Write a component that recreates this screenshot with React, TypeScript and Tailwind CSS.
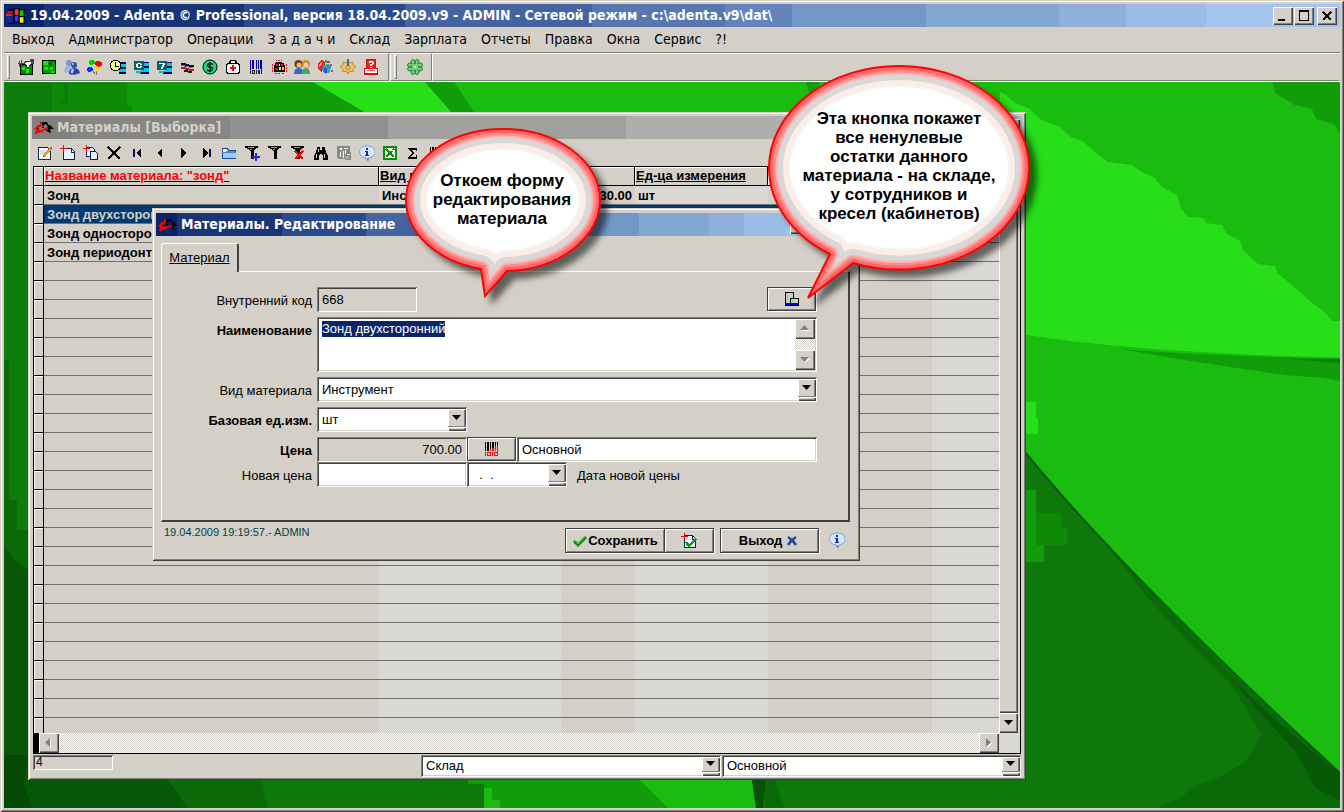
import { useEffect, useRef } from "react";
import type { ReactNode } from "react";
import clsx from "clsx";

const raised =
  "bg-[#d4d0c8] shadow-[inset_1px_1px_#d4d0c8,inset_-1px_-1px_#404040,inset_2px_2px_#fff,inset_-2px_-2px_#808080]";
const raisedButton =
  "bg-[#d4d0c8] shadow-[inset_1px_1px_#fff,inset_-1px_-1px_#404040,inset_-2px_-2px_#808080]";
const framedButton =
  "border border-[#404040] bg-[#d4d0c8] shadow-[inset_1px_1px_#fff,inset_-1px_-1px_#808080,1px_1px_#fff]";
const sunken =
  "shadow-[inset_1px_1px_#808080,inset_-1px_-1px_#fff,inset_2px_2px_#404040,inset_-2px_-2px_#d4d0c8]";
const activeBar =
  "bg-[linear-gradient(90deg,#0a246a_3%,#1a3575_3%_18%,#2a4a8c_18%_30%,#44639f_30%_44%,#5876b0_44%_54%,#6584bd_54%_59%,#7297c8_59%_69%,#82a7d0_69%_79%,#90b0dc_79%_84%,#9abce6_84%_90%,#a3c5ed_90%)]";
const inactiveBar =
  "bg-[linear-gradient(90deg,#808080_4%,#868684_4%_20%,#909090_20%_36%,#a0a09e_36%_60%,#aeaeac_60%_80%,#bcbcba_80%)]";
const dither =
  "bg-[repeating-conic-gradient(#fff_0_25%,#d4d0c8_0_50%)] bg-[length:2px_2px]";

const Icon = ({ children }: { children: ReactNode }) => (
  <svg
    viewBox="0 0 16 16"
    className="size-4 shrink-0"
    shapeRendering="crispEdges"
    aria-hidden="true"
  >
    {children}
  </svg>
);

// two overlapping stars, red on the left and black on the right
const Logo = () => (
  <svg viewBox="0 0 20 14" className="h-[14px] w-5 shrink-0" aria-hidden="true">
    <path d="M0 8l3-3 1-1 2 0 0-4 3 3-3 3-2 2 4 1 3-2 1 2-3 1-1 2-2-1-3 2-2 0 1-4z" fill="#f00" />
    <path d="M8 1l5 0 1 3 2 0 4 4-4 0 1 4-3-1-3-3 3-2-2-3-2 1-1 2-1-2z" fill="#000" />
    <path d="M8 6h2v1h-2zM4 7h1v1h-1z" fill="#000" />
    <path d="M12 7h2v2h-2z" fill="#f00" />
  </svg>
);

const icons: Record<string, ReactNode> = {
  flag: (
    <>
      <path d="M6 1h5v1h4v13h-4v-1h-5z" fill="#000" />
      <path d="M7 2h3v5h-3z" fill="#f33" />
      <path d="M11 3h3v5h-3z" fill="#0c0" />
      <path d="M7 8h3v5h-3z" fill="#33f" />
      <path d="M11 9h3v5h-3z" fill="#fe0" />
      <path d="M1 4h4v1h-4zM0 6h5v2h-5z" fill="#e22" />
      <path d="M0 9h5v2h-5zM1 12h4v1h-4z" fill="#22d" />
      <path d="M2 2h4v1h-4zM2 14h4v1h-4z" fill="#000" />
    </>
  ),
  chartHand: (
    <>
      <path d="M2 5h12v10h-12z" fill="#080" stroke="#000" />
      <path d="M4 8h3v3h-3zM8 10h3v4h-3z" fill="#0f0" />
      <path d="M1 2v6M0 4h7M3 1v5" stroke="#f00" fill="none" />
      <path d="M6 4l3-2h3l2 2-3 4h-2z" fill="#fff" stroke="#334" />
      <path d="M12 0h4v5h-3z" fill="#446" />
    </>
  ),
  chart: (
    <>
      <path d="M1.500 1.500h13v13h-13z" fill="#090" stroke="#000" />
      <path d="M2 2h5v4h-5zM3 8h4v3h-4zM9 8h3v3h-3zM10 12h4v2h-4z" fill="#0e0" />
      <path d="M8 3h3v4h-3z" fill="#060" />
    </>
  ),
  people: (
    <g shapeRendering="auto">
      <circle cx="5" cy="4" r="3" fill="#7b93dd" />
      <path d="M0 12q1-6 6-5l3 6-8 1z" fill="#9db2ee" />
      <circle cx="10" cy="6" r="3" fill="#2f4fb0" />
      <path d="M5 15q0-6 5-6t6 5q-5 3-11 1z" fill="#28469f" />
      <path d="M7 11q2-2 3-1l-1 4-2 0z" fill="#b9caf7" />
      <circle cx="9" cy="5" r="1" fill="#cbd7fa" />
    </g>
  ),
  balloons: (
    <>
      <path d="M3 1h4v1h1v3h-2v1h-3v-1h-1v-3h1z" fill="#0c0" />
      <path d="M9 2h4v1h2v4h-2v1h-4v-2h-1v-3h1z" fill="#f00" />
      <path d="M1 8h4v1h1v3h-2v1h-3v-1h-1v-3h1z" fill="#03f" />
      <path d="M8 7h3v1h1v3h-1v1h-3v-1h-1v-3h1z" fill="#fd0" />
      <path d="M6 12h1v1h1v2h-1v-1h-1zM9 12h1v4h-1z" fill="#777" />
    </>
  ),
  clock: (
    <>
      <path d="M9 3h7v12h-7z" fill="#0cc" />
      <path d="M9 3h7v2h-7zM10 8h6v2h-6zM9 13h7v2h-7z" fill="#007" />
      <path d="M3 1h5v1h2v2h1v5h-1v2h-2v1h-5v-1h-2v-2h-1v-5h1v-2h2z" fill="#000" />
      <path d="M3 2h5v1h1v1h1v5h-1v1h-1v1h-5v-1h-1v-1h-1v-5h1v-1h1z" fill="#ff9" />
      <path d="M5 3h1v4h3v1h-4z" fill="#000" />
    </>
  ),
  calendarC: (
    <>
      <path d="M8 3h8v12h-8z" fill="#0cc" />
      <path d="M9 3h7v1h-7zM10 7h6v2h-6zM7 13h9v2h-9z" fill="#007" />
      <path d="M1 2h10v9h-10z" fill="#066" />
      <path d="M4 4h4v1h1v1h-2v-1h-2v3h2v-1h2v1h-1v1h-4v-1h-1v-3h1z" fill="#fff" />
      <path d="M3 12h5v2h-5z" fill="#0bb" />
    </>
  ),
  calendar7: (
    <>
      <path d="M8 3h8v12h-8z" fill="#0cc" />
      <path d="M9 3h7v1h-7zM10 7h6v2h-6zM7 13h9v2h-9z" fill="#007" />
      <path d="M1 2h10v9h-10z" fill="#066" />
      <path d="M3 4h6v2h-1v2h-1v2h-2v-2h1v-2h1v-1h-4z" fill="#fff" />
      <path d="M3 12h5v2h-5z" fill="#0bb" />
    </>
  ),
  waves: (
    <>
      <path d="M2 4h5v1h3v1h5v2h-5v-1h-4v-1h-4z" fill="#111" />
      <path d="M2 6h4v1h4v1h4v1h-4v-1h-5v-1h-3z" fill="#66d" />
      <path d="M2 8h5v1h3v1h5v2h-5v-1h-4v-1h-4z" fill="#c11" />
      <path d="M5 11h4v1h4v2h-4v-1h-4z" fill="#222" />
    </>
  ),
  dollar: (
    <g shapeRendering="auto">
      <circle cx="8" cy="8" r="7" fill="#1fd67a" stroke="#000" />
      <path
        d="M11 5.500q-3-2-5 0t2 2.500 2 3-5 0M8 3v10"
        fill="none"
        stroke="#000"
        strokeWidth="1.200"
      />
    </g>
  ),
  medkit: (
    <>
      <path d="M5 1h6v1h1v2h2v1h1v9h-1v1h-12v-1h-1v-9h1v-1h2v-2h1z" fill="#000" />
      <path d="M6 2h4v2h-4zM3 5h10v1h1v7h-1v1h-10v-1h-1v-7h1z" fill="#fff" />
      <path d="M7 6h2v2h2v2h-2v2h-2v-2h-2v-2h2z" fill="#f00" />
    </>
  ),
  barcodeBlue: (
    <>
      <path
        d="M2 1h1v9h-1zM4 1h2v9h-2zM8 1h1v9h-1zM10 1h1v9h-1zM12 1h2v9h-2z"
        fill="#009"
      />
      <path
        d="M2 10h1v5h-1zM4 11h3v4h-3zM8 11h1v4h-1zM10 11h2v4h-2zM13 10h1v5h-1z"
        fill="#222"
      />
      <path d="M5 12h1v2h-1z" fill="#d4d0c8" />
    </>
  ),
  barcode: (
    <>
      <path d="M2 2h1v8h-1zM4 2h2v8h-2zM7 2h1v8h-1zM9 2h2v8h-2zM12 2h2v8h-2z" />
      <path d="M2 11h1v3h-1zM4 11h2v3h-2zM7 11h1v3h-1zM9 11h2v3h-2zM12 11h2v3h-2z" />
    </>
  ),
  barcodeRed: (
    <>
      <path d="M1 1h1v9h-1zM3 1h2v9h-2zM6 1h1v7h-1zM8 1h2v6h-2zM11 1h1v4h-1zM13 1h1v3h-1z" />
      <path
        d="M1 11h1v4h-1zM3 11h4v4h-4zM8 11h1v4h-1zM10 11h4v4h-4zM6 8h1v2h-1zM8 7h2v3h-2zM11 5h1v5h-1zM13 4h1v7h-1z"
        fill="#e11"
      />
      <path d="M4 12h2v2h-2zM11 12h2v2h-2z" fill="#d4d0c8" />
    </>
  ),
  gift: (
    <>
      <path d="M4 4h1v-1h6v1h2v2h1v7h-11v-7h1z" fill="#000" />
      <path d="M5 5h2v2h-2zM10 5h2v2h-2zM4 9h3v2h-3z" fill="#e11" />
      <path d="M8 5h1v2h-1zM8 8h2v3h-2zM11 8h2v3h-2z" fill="#ee0" />
      <path
        d="M1 5h1v2h-1zM1 8h1v2h-1zM1 11h1v2h-1zM15 5h1v2h-1zM15 8h1v2h-1zM15 11h1v2h-1zM5 1h1v1h-1zM7 1h2v1h-2zM10 1h1v1h-1zM4 14h2v1h-2zM7 14h2v1h-2zM11 14h2v1h-2z"
        fill="#e11"
      />
    </>
  ),
  users: (
    <g shapeRendering="auto">
      <circle cx="4.500" cy="5" r="4" fill="#6b3a10" />
      <circle cx="5" cy="6" r="2.500" fill="#f4b884" />
      <circle cx="12" cy="5" r="4" fill="#c98a2a" />
      <circle cx="12" cy="6" r="2.500" fill="#f9cf9a" />
      <path d="M0 15q0-6 5-6t4 6z" fill="#2a6cc8" />
      <path d="M8 15q0-6 4-6t4 6z" fill="#4fa35a" />
    </g>
  ),
  cubes: (
    <>
      <path d="M1 4l4-3 3 3v7l-4 2-3-3z" fill="#d22" />
      <path d="M2 5l3-2v3l-3 2z" fill="#e8b" />
      <path d="M6 6l5-1 3 3-1 5-5 2-3-3z" fill="#2a9" />
      <path d="M7 9h3v5h-3z" fill="#35d" />
      <path d="M10 2h3v2h-3zM13 5h2v2h-2zM14 11h2v2h-2z" fill="#c2c" />
      <path d="M8 1h2v3h-2z" fill="#2b2" />
    </>
  ),
  gear: (
    <g shapeRendering="auto">
      <path
        d="M8 2l2 2 3-1v3l3 2-3 2v3l-3-1-2 3-2-3-3 1v-3l-3-2 3-2v-3l3 1z"
        fill="#f1c863"
        stroke="#b98a28"
      />
      <circle cx="8" cy="8.500" r="2" fill="#d4d0c8" stroke="#a47a20" />
      <path d="M7 0h2v7h-2z" fill="#456b8f" />
    </g>
  ),
  question: (
    <>
      <path d="M3 0h10v9h2v7h-14v-7h2z" fill="#c11" />
      <path d="M4 1h8v8h-8z" fill="#f22" />
      <path d="M6 2h4v1h1v2h-1v1h-1v1h-2v-2h2v-2h-1v1h-2zM7 8h2v1h-2z" fill="#fff" />
      <path d="M2 10h12v4h-12z" fill="#fff" />
      <path d="M4 11h8v1h-8z" fill="#d55" />
    </>
  ),
  clover: (
    <g shapeRendering="auto" fill="#6fd47c" stroke="#2a7c38">
      <ellipse cx="6" cy="3" rx="2" ry="2.500" />
      <ellipse cx="10" cy="3" rx="2" ry="2.500" />
      <ellipse cx="3" cy="6" rx="2.500" ry="2" />
      <ellipse cx="13" cy="6" rx="2.500" ry="2" />
      <ellipse cx="3" cy="10" rx="2.500" ry="2" />
      <ellipse cx="13" cy="10" rx="2.500" ry="2" />
      <ellipse cx="6" cy="13" rx="2" ry="2.500" />
      <ellipse cx="10" cy="13" rx="2" ry="2.500" />
      <path d="M5 5h6v6h-6z" stroke="none" />
      <circle cx="8" cy="8" r="1" fill="#ffef70" stroke="none" />
    </g>
  ),
  edit: (
    <>
      <path d="M1.500 2.500h9l3 3v9h-12z" fill="#fff" stroke="#125" />
      <path d="M3 5h5v5h-5z" fill="#cfe3fb" />
      <path d="M13 2h2v2l-6 7-3 1 1-3z" fill="#e79a2a" />
      <path d="M13 2h2v2h-2z" fill="#d55" />
      <path d="M6 11h1v1h-1z" fill="#000" />
    </>
  ),
  add: (
    <>
      <path d="M3.500 3.500h8l3 3v8h-11z" fill="#eaf3ff" stroke="#125" />
      <path d="M11 3v4h4" fill="none" stroke="#125" />
      <path d="M3 0h1v7h-1zM0 3h7v1h-7z" fill="#f00" />
    </>
  ),
  copy: (
    <>
      <path d="M3.500 2.500h6l2 2v7h-8z" fill="#eaf3ff" stroke="#125" />
      <path d="M7.500 6.500h5l2 2v6h-7z" fill="#eaf3ff" stroke="#125" />
      <path d="M3 0h1v7h-1zM0 3h7v1h-7z" fill="#f00" />
    </>
  ),
  del: (
    <path
      d="M2 2l12 12M14 2l-12 12"
      stroke="#000"
      strokeWidth="2"
      fill="none"
    />
  ),
  first: (
    <>
      <path d="M4 4h2v8h-2z" fill="#006" />
      <path d="M12 3v10l-5-5z" />
    </>
  ),
  prev: <path d="M10 3v10l-5-5z" />,
  next: <path d="M6 3v10l5-5z" />,
  last: (
    <>
      <path d="M11 4h2v8h-2z" fill="#006" />
      <path d="M5 3v10l5-5z" />
    </>
  ),
  folder: (
    <>
      <path d="M1.500 12.500v-9h5l1 2h7v8h-13z" fill="#fff" stroke="#17528c" />
      <path d="M2 8h13v5h-13z" fill="#9cc9f5" />
      <path d="M1 7h3l1-1h9v1h1v1h-14z" fill="#4b8ac6" />
    </>
  ),
  filterAdd: (
    <>
      <path d="M1 1h13v2h-2v1h-1v1h-1v9h-3v-8h-1v-1h-1v-1h-2v-1h-2z" />
      <path d="M4 2h6v1h-6zM6 4h2v1h-2z" fill="#999" />
      <path d="M11 8h1v3h3v1h-3v3h-1v-3h-3v-1h3z" fill="#22f" stroke="#22f" />
    </>
  ),
  filter: (
    <>
      <path d="M1 1h13v2h-2v1h-1v1h-1v9h-3v-8h-1v-1h-1v-1h-2v-1h-2z" />
      <path d="M4 2h6v1h-6zM6 4h2v1h-2z" fill="#999" />
    </>
  ),
  filterDel: (
    <>
      <path d="M1 1h13v2h-2v1h-1v1h-1v9h-3v-8h-1v-1h-1v-1h-2v-1h-2z" />
      <path d="M4 2h6v1h-6z" fill="#999" />
      <path d="M5 6l8 8M13 6l-8 8" stroke="#f00" strokeWidth="2.500" fill="none" />
    </>
  ),
  binoculars: (
    <>
      <path d="M4 2h3v3h2v-3h3v3h1v3h1v2h1v5h-5v-5h-1v-1h-2v1h-1v5h-5v-5h1v-2h1v-3h1z" />
      <path d="M3 9h1v4h-1zM11 9h1v4h-1zM5 4h1v3h-1z" fill="#ccc" />
    </>
  ),
  report: (
    <>
      <path d="M1 1h13v6h1v8h-6v-1h-7v-1h-1z" fill="#888" />
      <path d="M4 3h2v2h-2zM8 3h4v1h-4zM4 7h1v5h-1zM7 6h1v7h-1zM9 5h1v4h-1zM11 9h3v1h-3z" fill="#fff" />
      <path d="M9 11h4v3h-4z" fill="#aaa" />
    </>
  ),
  info: (
    <g shapeRendering="auto">
      <path d="M8 1a7 6 0 0 1 2 12l-1 3-2-3a7 6 0 0 1 1-12z" fill="#d5e7fa" stroke="#7ea3cb" />
      <path d="M4 12a7 6 0 0 0 6 1l-1 3-2-3z" fill="#5b87b8" />
      <path d="M7 3h2v2h-2zM6 6h3v4h1v1h-4v-1h1v-3h-1z" fill="#0b2fa8" />
    </g>
  ),
  excel: (
    <>
      <path d="M2 2h12v12h-12z" fill="#fff" stroke="#0a8a0a" strokeWidth="2" />
      <path d="M4 4l8 8M12 4l-8 8" stroke="#0a8a0a" strokeWidth="2.500" fill="none" />
      <path d="M9 5h3v1h-3z" fill="#fff" />
    </>
  ),
  sigma: (
    <path d="M3 3h9v3h-1v-1h-5l3 3-3 4h5v-2h1v4h-9v-1l4-5-4-4z" />
  ),
  stock: (
    <>
      <path d="M1.500 1.500h8v13h-8z" fill="#d4d0c8" stroke="#000" />
      <path d="M6.500 7.500h8v7h-8z" fill="#d4d0c8" stroke="#000" />
      <path d="M3 3h1v8h-1zM8 9h1v2h-1z" fill="#0ff" />
      <path d="M2 12h4v2h-4zM7 12h7v2h-7z" fill="#00f" />
    </>
  ),
  check: (
    <g shapeRendering="auto">
      <path d="M2 8l4 4 8-8" fill="none" stroke="#0a8a0a" strokeWidth="3" />
      <path d="M3 8l3 3 7-7" fill="none" stroke="#38c538" />
    </g>
  ),
  saveNew: (
    <>
      <path d="M3.500 2.500h8l3 3v9h-11z" fill="#eaf3ff" stroke="#125" />
      <path d="M11 2v4h4" fill="none" stroke="#125" />
      <path d="M3 0h1v6h-1zM0 3h7v1h-7z" fill="#f00" />
      <path d="M5 9l3 4 7-7" fill="none" stroke="#0a9a0a" strokeWidth="2.500" />
    </>
  ),
  cross: (
    <g shapeRendering="auto">
      <path d="M4 4q5 3 8 8M12 4q-5 3-8 8" stroke="#1d4a96" strokeWidth="2.500" fill="none" />
    </g>
  ),
};

const menu = [
  "Выход",
  "Администратор",
  "Операции",
  "З а д а ч и",
  "Склад",
  "Зарплата",
  "Отчеты",
  "Правка",
  "Окна",
  "Сервис",
  "?!",
];

const mainTools = [
  "chartHand",
  "chart",
  "people",
  "balloons",
  "clock",
  "calendarC",
  "calendar7",
  "waves",
  "dollar",
  "medkit",
  "barcodeBlue",
  "gift",
  "users",
  "cubes",
  "gear",
  "question",
];

const listTools = [
  "edit",
  "add",
  "copy",
  "del",
  "first",
  "prev",
  "next",
  "last",
  "folder",
  "filterAdd",
  "filter",
  "filterDel",
  "binoculars",
  "report",
  "info",
  "excel",
  "sigma",
  "barcode",
];

const rows = [
  ["Зонд", "Инструмент", "30.00", "шт"],
  ["Зонд двухсторонний", "Инструмент", "700.00", "шт"],
  ["Зонд односторонний", "Инструмент", "", "шт"],
  ["Зонд периодонтальный", "Инструмент", "", "шт"],
  ...Array.from({ length: 25 }, () => ["", "", "", ""]),
];

const ToolButton = ({ name }: { name: string }) => (
  <button type="button" aria-label={name} className="flex h-6 w-[23px] items-center justify-center">
    <Icon>{icons[name]}</Icon>
  </button>
);

const Grip = () => (
  <span className="mr-1 ml-[3px] h-6 w-[3px] border-t border-r border-b border-l border-t-white border-r-[#808080] border-b-[#808080] border-l-white" />
);

const Triangle = ({ dir, muted }: { dir: "up" | "down" | "left" | "right"; muted?: boolean }) => {
  const paths = {
    up: "M0 6h9l-4.500-5z",
    down: "M0 2h9l-4.500 5z",
    left: "M6 0v9l-5-4.500z",
    right: "M2 0v9l5-4.500z",
  };
  return (
    <svg viewBox="0 0 10 10" className="size-[10px]" aria-hidden="true">
      {muted && <path d={paths[dir]} fill="#fff" transform="translate(1 1)" />}
      <path d={paths[dir]} fill={muted ? "#808080" : "#000"} />
    </svg>
  );
};

const CaptionButton = ({ kind }: { kind: "min" | "max" | "close" }) => (
  <button
    type="button"
    aria-label={kind}
    className={clsx(raisedButton, "flex h-[18px] w-5 items-center justify-center", kind === "close" && "ml-[3px]", kind === "max" && "ml-px")}
  >
    <svg viewBox="0 0 12 12" className="size-3" shapeRendering="crispEdges" aria-hidden="true">
      {kind === "min" && <path d="M1 9h7v2h-7z" />}
      {kind === "max" && <path d="M1 0h10v11h-10zM2 2v8h8v-8z" fillRule="evenodd" />}
      {kind === "close" && (
        <path d="M2 2l8 8M10 2l-8 8" stroke="#000" strokeWidth="2" fill="none" />
      )}
    </svg>
  </button>
);

const Combo = ({ id, label, value, className }: { id: string; label?: string; value: string; className?: string }) => (
  <div className={clsx("relative", className)}>
    <select
      id={id}
      aria-label={label}
      className={clsx(sunken, "size-full appearance-none bg-white pl-[5px] text-[13px] text-black outline-none")}
    >
      <option>{value}</option>
    </select>
    <span className={clsx(raisedButton, "pointer-events-none absolute top-[2px] right-px bottom-px flex w-[18px] flex-col")}>
      <span className="flex flex-1 items-center justify-center border-b border-[#808080]">
        <Triangle dir="down" />
      </span>
      <span className="mb-px h-[3px] border-t border-white" />
    </span>
  </div>
);

const Wallpaper = () => (
  <svg
    viewBox="4 82 1336 726"
    preserveAspectRatio="none"
    className="absolute inset-0 size-full"
    aria-hidden="true"
  >
    <rect x="4" y="82" width="1336" height="726" fill="#1abc0f" />
    <path d="M4 82h450l40 60v600h-490z" fill="#119d0a" />
    <path d="M4 82h123v24h5v40h-128z" fill="#0e8a08" />
    <path d="M4 82h48v726h-48z" fill="#0e7c0a" />
    <path d="M64 82h4v22h-8v-4h4z" fill="#0e7c0a" />
    <path d="M313 82h112l30 34h-84z" fill="#27de19" />
    <path d="M425 82h26q12 16 24 34h-20z" fill="#119d0a" />
    <path d="M806 82h14l-4 14h-6z" fill="#119d0a" />
    <path
      d="M1000 92L1006 95 1012 101 1020 105 1030 109 1040 119 1060 127 1070 137 1082 141 1100 156 1108 162 1132 165 1140 171 1155 178 1162 187 1177 195 1181 209 1188 217 1204 218 1206 223 1222 225 1226 233 1240 241 1243 250 1258 264 1275 266 1278 274 1287 281 1300 292 1312 303 1325 312 1332 321 1340 321V358Q1130 352 1020 334L1000 330z"
      fill="#27de19"
    />
    <path d="M1273 82h67v52l-6-10-18-5-4-10-17-4-10-6-10-6z" fill="#119d0a" />
    <path d="M1120 349q100 8 220 9v23l-16-3-40-3-60-9-40-6z" fill="#119d0a" />
    <path d="M1290 359h50v4z" fill="#0e780a" />
    <path d="M1026 402h10v16h2v16h-12z" fill="#27de19" />
    <path d="M1020 446q100 124 320 327v35h-320z" fill="#0e780a" />
    <path d="M1026 490h10v23h8v17h-8v15h8v17h-18z" fill="#119d0a" />
    <path d="M1036 513h25v14h6v18h-31z" fill="#0e8a08" />
    <path d="M1105 543q100 112 235 230v35h-184l24-10 16-13 20-6 30-17 15-28-13-23-20-30-40-40-40-43z" fill="#0a6a08" />
    <path d="M1230 677q50 50 110 96v28l-24-13-20-36-40-44z" fill="#065a06" />
    <path d="M1020 446q100 124 320 327" fill="none" stroke="#0b5a18" strokeWidth="2" />
    <path d="M4 780h480v28h-480z" fill="#0e780a" />
    <path d="M4 360h5v140h8v30h11v70h-24z" fill="#0a6a08" />
    <path d="M4 545l10 15 14 10v210h140l20 28h-184z" fill="#065806" />
    <path d="M4 755h24l-4 30 8 23h-28z" fill="#044a04" />
    <path d="M168 780h93l7 28h-80z" fill="#0a6a08" />
    <path d="M468 780h184l20 28h-172v-8h-8v-12h-8v-4h-16z" fill="#119d0a" />
    <path d="M640 780h112l4 28h-88l-14-14z" fill="#1abc0f" />
    <path d="M752 780h274v28h-270z" fill="#0e780a" />
    <path d="M752 780h14l-3 28h-7z" fill="#065206" />
    <path d="M765 780h10l9 28h-19z" fill="#0a6a08" />
  </svg>
);

type BubbleProps = {
  id: string;
  path: string;
  box: string;
  className: string;
  children: ReactNode;
};

const Bubble = ({ id, path, box, className, children }: BubbleProps) => (
  <div className={clsx("pointer-events-none absolute z-20 text-center text-[17px] leading-[19px] font-bold text-black", className)}>
    <svg
      viewBox={box}
      className="absolute inset-0 size-full overflow-visible drop-shadow-[7px_7px_3px_rgba(0,0,0,0.55)]"
      aria-hidden="true"
    >
      <clipPath id={id}>
        <path d={path} />
      </clipPath>
      <g clipPath={`url(#${id})`} strokeLinejoin="round">
        <path d={path} fill="#fff" stroke="#eef6f6" strokeWidth="42" />
        <path d={path} fill="none" stroke="#ffece6" strokeWidth="38" />
        <path d={path} fill="none" stroke="#d8d8d8" strokeWidth="28" />
        <path d={path} fill="none" stroke="#ffb4b4" strokeWidth="17" />
        <path d={path} fill="none" stroke="#ff8c8c" strokeWidth="13" />
        <path d={path} fill="none" stroke="#ff6868" strokeWidth="8" />
      </g>
      <path d={path} fill="none" stroke="#f00" strokeWidth="2" />
    </svg>
    <p className="relative">{children}</p>
  </div>
);

const MaterialsList = () => (
  <section className={clsx(raised, "absolute top-[30px] left-[24px] flex h-[668px] w-[998px] flex-col p-1")}>
    <header className={clsx(inactiveBar, "flex h-[23px] shrink-0 items-center gap-[3px] pr-[2px] pl-[2px]")}>
      <Logo />
      <h2 className="flex-1 font-['DejaVu_Sans_Condensed','DejaVu_Sans',sans-serif] text-[14px] font-bold text-[#d4d0c8]">
        Материалы [Выборка]
      </h2>
      <CaptionButton kind="close" />
    </header>
    <div className="flex h-[27px] shrink-0 items-center px-px">
      {listTools.map((name) => (
        <ToolButton key={name} name={name} />
      ))}
    </div>

    <div className="mr-px ml-px flex min-h-0 flex-1 border border-black">
      <div className="flex min-w-0 flex-1 flex-col">
        <div className="min-h-0 flex-1 overflow-hidden">
          <table className="w-full table-fixed border-separate border-spacing-0 text-left text-[13px] leading-[18px] font-bold whitespace-nowrap text-black">
            <colgroup>
              <col className="w-[10px]" />
              <col className="w-[335px]" />
              <col className="w-[182px] bg-[#dad8d5]" />
              <col className="w-[74px]" />
              <col className="w-[133px] bg-[#dad8d5]" />
              <col className="w-[164px]" />
              <col className="bg-[#dad8d5]" />
            </colgroup>
            <thead className="bg-[#d4d0c8] underline">
              <tr className="h-[19px] [&>th]:overflow-hidden [&>th]:border-r [&>th]:border-b [&>th]:border-black [&>th]:p-0 [&>th]:pl-px [&>th]:shadow-[inset_1px_1px_#fff]">
                <th />
                <th className="text-[#f00]">Название материала: "зонд"</th>
                <th>Вид материала</th>
                <th>Цена</th>
                <th>Ед-ца измерения</th>
                <th />
                <th />
              </tr>
            </thead>
            <tbody className="leading-4">
              {rows.map(([name, kind, price, unit], i) => (
                <tr
                  key={i}
                  className={clsx(
                    "h-[19px] [&>td]:overflow-hidden [&>td]:border-b [&>td]:border-[#707070] [&>td]:px-[3px] [&>td]:pt-[2px] [&>td]:pb-0",
                    i === 1 && "bg-[#003a70] text-[#d4d0c8]"
                  )}
                >
                  <th className="border-r border-b border-black bg-[#d4d0c8] p-0 shadow-[inset_1px_1px_#fff]" />
                  <td>{name}</td>
                  <td>{kind}</td>
                  <td className="text-right">{price}</td>
                  <td>{unit}</td>
                  <td />
                  <td />
                </tr>
              ))}
            </tbody>
          </table>
        </div>
        <div className={clsx(dither, "flex h-5 border-l-[5px] border-black")}>
          <button type="button" aria-label="Влево" className={clsx(raisedButton, "flex w-5 items-center justify-center")}>
            <Triangle dir="left" muted />
          </button>
          <button type="button" aria-label="Вправо" className={clsx(raisedButton, "ml-auto flex w-5 items-center justify-center")}>
            <Triangle dir="right" muted />
          </button>
        </div>
      </div>
      <div className="flex w-[21px] flex-col bg-[#dad8d5] pr-[2px]">
        <span className={clsx(raisedButton, "flex-1")} />
        <button type="button" aria-label="Вниз" className={clsx(raisedButton, "flex h-5 items-center justify-center")}>
          <Triangle dir="down" />
        </button>
        <span className="h-5" />
      </div>
    </div>

    <footer className="mr-px ml-px flex h-[22px] shrink-0 items-start pt-px">
      <input
        aria-label="Количество"
        readOnly
        defaultValue="4"
        className={clsx(sunken, "h-[15px] w-20 px-[3px] text-[12px] leading-[15px] text-black outline-none")}
      />
      <Combo id="store" label="Место" value="Склад" className="ml-auto h-[22px] w-[300px]" />
      <Combo id="store-name" label="Название" value="Основной" className="ml-px h-[22px] w-[299px]" />
    </footer>
  </section>
);

const EditDialog = () => {
  const nameRef = useRef<HTMLTextAreaElement>(null);

  // the name comes up selected when the form opens
  useEffect(() => {
    nameRef.current?.focus();
    nameRef.current?.select();
  }, []);

  const label = "pt-[6px] pr-[5px] text-right leading-[15px]";
  const field = "h-[25px] px-[5px] text-[13px] text-black outline-none";

  return (
    <section className={clsx(raised, "absolute top-[126px] left-[148px] flex h-[353px] w-[708px] flex-col p-1 text-[13px] text-black")}>
      <header className={clsx(activeBar, "mt-px flex h-[23px] shrink-0 items-center pr-[2px] pl-[2px]")}>
        <Logo />
        <h2 className="flex-1 pl-[3px] font-['DejaVu_Sans_Condensed','DejaVu_Sans',sans-serif] text-[14px] font-bold text-white">
          Материалы. Редактирование
        </h2>
        <CaptionButton kind="min" />
        <CaptionButton kind="max" />
        <CaptionButton kind="close" />
      </header>

      <div className="mt-[7px] flex pl-[5px]">
        <button
          type="button"
          className="relative z-10 -mb-px h-[29px] w-[78px] rounded-t-[3px] border-t border-r-2 border-l border-t-white border-r-[#404040] border-l-white bg-[#d4d0c8] text-center underline"
        >
          Материал
        </button>
      </div>

      <form className="mr-[6px] ml-[5px] grid h-[251px] shrink-0 grid-cols-[151px_500px] content-start gap-y-[5px] border-t border-r-2 border-b-2 border-l border-t-white border-r-[#404040] border-b-[#404040] border-l-white pt-[15px] pl-[4px]">
        <label htmlFor="code" className={label}>Внутренний код</label>
        <div className="flex justify-between">
          <input id="code" readOnly defaultValue="668" className={clsx(sunken, field, "w-[100px] bg-[#d4d0c8]")} />
          <button type="button" aria-label="Остатки" className={clsx(framedButton, "mr-px flex h-6 w-[49px] items-center justify-center")}>
            <Icon>{icons.stock}</Icon>
          </button>
        </div>

        <label htmlFor="name" className={clsx(label, "font-bold")}>Наименование</label>
        <div className={clsx(sunken, "flex h-[55px] bg-white p-[2px]")}>
          <textarea
            id="name"
            ref={nameRef}
            defaultValue="Зонд двухсторонний"
            className="flex-1 resize-none px-[3px] py-[2px] leading-4 outline-none selection:bg-[#0a246a] selection:text-white"
          />
          <div className={clsx(dither, "flex w-5 flex-col justify-between")}>
            <button type="button" aria-label="Вверх" className={clsx(raisedButton, "flex h-5 items-center justify-center")}>
              <Triangle dir="up" muted />
            </button>
            <button type="button" aria-label="Вниз" className={clsx(raisedButton, "flex h-5 items-center justify-center")}>
              <Triangle dir="down" muted />
            </button>
          </div>
        </div>

        <label htmlFor="kind" className={label}>Вид материала</label>
        <Combo id="kind" value="Инструмент" className="h-[25px]" />

        <label htmlFor="unit" className={clsx(label, "font-bold")}>Базовая ед.изм.</label>
        <Combo id="unit" value="шт" className="h-[25px] w-[150px]" />

        <label htmlFor="price" className={clsx(label, "font-bold")}>Цена</label>
        <div className="flex">
          <input id="price" readOnly defaultValue="700.00" className={clsx(sunken, field, "w-[150px] bg-[#d4d0c8] text-right")} />
          <button type="button" aria-label="Штрихкод" className={clsx(framedButton, "mr-px flex h-6 w-[49px] items-center justify-center")}>
            <Icon>{icons.barcodeRed}</Icon>
          </button>
          <input aria-label="Склад" defaultValue="Основной" className={clsx(sunken, field, "min-w-0 flex-1 bg-white")} />
        </div>

        <label htmlFor="new-price" className={clsx(label, "-mt-[5px]")}>Новая цена</label>
        <div className="-mt-[5px] flex">
          <input id="new-price" className={clsx(sunken, field, "w-[150px] bg-white")} />
          <Combo id="new-date" value={"\u00a0\u00a0.\u00a0\u00a0."} className="h-[25px] w-[100px]" />
          <label htmlFor="new-date" className="pt-[6px] pl-[10px] leading-[15px]">Дата новой цены</label>
        </div>
      </form>

      <footer className="flex items-start justify-end pt-[6px] pr-[11px]">
        <span className="mr-auto pl-2 text-[11px] leading-[9px] text-[#004040]">19.04.2009 19:19:57.- ADMIN</span>
        <button type="submit" className={clsx(framedButton, "flex h-[25px] w-[100px] items-center justify-center font-bold")}>
          <Icon>{icons.check}</Icon>
          Сохранить
        </button>
        <button type="button" aria-label="Сохранить и добавить" className={clsx(framedButton, "flex h-[25px] w-[49px] items-center justify-center border-l-0")}>
          <Icon>{icons.saveNew}</Icon>
        </button>
        <button type="button" className={clsx(framedButton, "mr-[10px] ml-[6px] flex h-[25px] w-[99px] items-center justify-center gap-[2px] font-bold")}>
          Выход
          <Icon>{icons.cross}</Icon>
        </button>
        <button type="button" aria-label="Справка" className="flex h-6 items-center">
          <Icon>{icons.info}</Icon>
        </button>
      </footer>
    </section>
  );
};

const App = () => {
  return (
    <main className={clsx(raised, "relative flex h-screen flex-col overflow-hidden p-1 font-['Liberation_Sans',Arial,sans-serif] text-[13px] text-black")}>
      <header className={clsx(activeBar, "flex h-[23px] shrink-0 items-center pr-[3px] pl-[2px]")}>
        <svg viewBox="0 0 16 16" preserveAspectRatio="none" className="mr-1 h-[18px] w-5" aria-hidden="true">
          {icons.flag}
        </svg>
        <h1 className="flex-1 font-['DejaVu_Sans_Condensed','DejaVu_Sans',sans-serif] text-[14px] font-bold whitespace-nowrap text-white">
          19.04.2009 - Adenta © Professional, версия 18.04.2009.v9 - ADMIN - Сетевой режим - c:\adenta.v9\dat\
        </h1>
        <CaptionButton kind="min" />
        <CaptionButton kind="max" />
        <CaptionButton kind="close" />
      </header>

      <nav className="flex h-[25px] shrink-0 items-center pl-px font-['DejaVu_Sans_Condensed','DejaVu_Sans',sans-serif] text-[14px]">
        {menu.map((item) => (
          <button key={item} type="button" className="px-[7px]">
            {item}
          </button>
        ))}
      </nav>

      <div className="flex h-[30px] shrink-0 items-stretch border-y border-t-[#808080] border-b-white">
        <div className="flex items-center border-t border-r border-b border-t-white border-r-[#808080] border-b-[#808080] pr-[6px]">
          <Grip />
          {mainTools.map((name) => (
            <ToolButton key={name} name={name} />
          ))}
        </div>
        <div className="ml-px flex items-center border border-t-white border-r-[#808080] border-b-[#808080] border-l-white pr-[5px]">
          <Grip />
          <div className="pl-[2px]">
            <ToolButton name="clover" />
          </div>
        </div>
        <div className="flex-1 border border-t-white border-r-transparent border-b-[#808080] border-l-white" />
      </div>

      <div className="relative flex-1 overflow-hidden">
        <Wallpaper />
        <MaterialsList />
        <EditDialog />
      </div>

      <Bubble
        id="bubble-open"
        box="400 120 204 185"
        path="M481 269A97 71 0 0 1 406 200A97 71 0 0 1 600 200A97 71 0 0 1 507 271L485 296Z"
        className="top-[120px] left-[400px] h-[185px] w-[204px] pt-[51px]"
      >
        Откоем форму
        <br />
        редактирования
        <br />
        материала
      </Bubble>
      <Bubble
        id="bubble-stock"
        box="760 60 278 245"
        path="M830 254A130 102 0 0 1 769 168A130 102 0 0 1 1029 168A130 102 0 0 1 853 263L808 298Z"
        className="top-[60px] left-[760px] h-[245px] w-[278px] pt-[49px]"
      >
        Эта кнопка покажет
        <br />
        все ненулевые
        <br />
        остатки данного
        <br />
        материала - на складе,
        <br />у сотрудников и<br />
        кресел (кабинетов)
      </Bubble>
    </main>
  );
};

export default App;
